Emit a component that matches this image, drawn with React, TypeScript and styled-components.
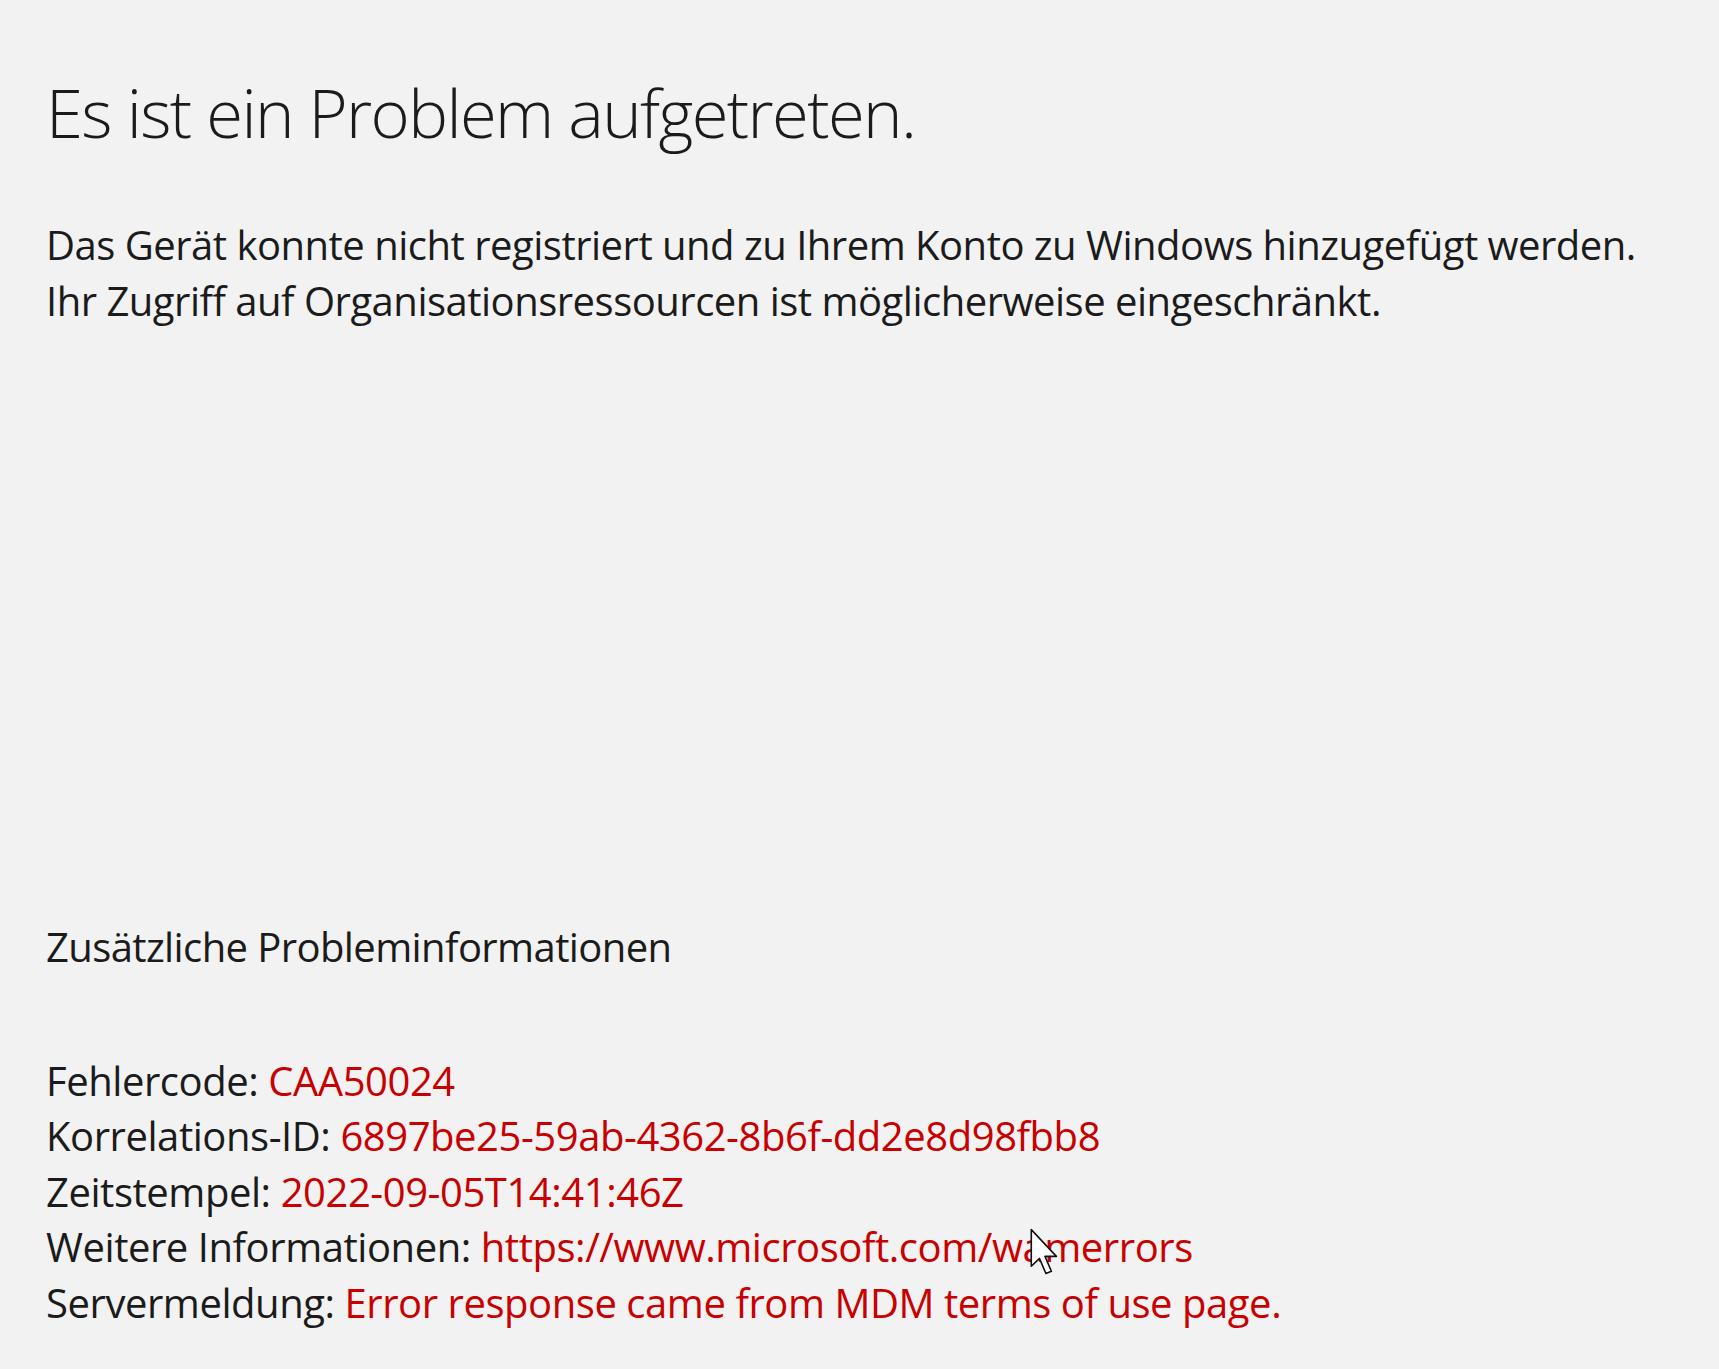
import React, { FC } from "react";
import styled, { createGlobalStyle } from "styled-components";

const GlobalStyle = createGlobalStyle`
  html, body {
    margin: 0;
    padding: 0;
    background: #f2f2f2;
  }

  body {
    font-family: "Open Sans", "Noto Sans", "Liberation Sans", sans-serif;
    color: #1b1b1b;
  }
`;

const Page = styled.main`
  position: relative;
  box-sizing: border-box;
  width: 1719px;
  height: 1369px;
  padding: 66px 0 0 46px;
  overflow: hidden;
  display: flex;
  flex-direction: column;
`;

const Title = styled.h1`
  margin: 0;
  font-size: 67px;
  font-weight: 300;
  line-height: 92px;
  letter-spacing: -1.65px;
`;

const Text = styled.p`
  margin: 0;
  font-size: 40px;
  font-weight: 400;
  line-height: 55.5px;
  letter-spacing: -0.45px;
`;

const Message = styled(Text)`
  margin-top: 59px;
  letter-spacing: -0.5px;
`;

const Subtitle = styled(Text)`
  margin-top: auto;
  letter-spacing: -0.6px;
`;

const Details = styled.dl`
  margin: 78px 0 0;
  margin-bottom: 39px;
`;

const Row = styled(Text).attrs({ as: "div" })``;

const Label = styled.dt`
  display: inline;
  margin: 0;
`;

const Value = styled.dd`
  display: inline;
  margin: 0;
  color: #c80000;
`;

const Cursor = styled.svg`
  position: absolute;
  left: 1029px;
  top: 1227px;
  width: 32px;
  height: 51px;
`;

const rows = [
  { label: "Fehlercode:", value: "CAA50024" },
  { label: "Korrelations-ID:", value: "6897be25-59ab-4362-8b6f-dd2e8d98fbb8" },
  { label: "Zeitstempel:", value: "2022-09-05T14:41:46Z" },
  { label: "Weitere Informationen:", value: "https://www.microsoft.com/wamerrors" },
  { label: "Servermeldung:", value: "Error response came from MDM terms of use page." },
];

const App: FC = () => {
  return (
    <>
      <GlobalStyle />
      <Page>
        <Title>Es ist ein Problem aufgetreten.</Title>
        <Message>
          Das Gerät konnte nicht registriert und zu Ihrem Konto zu Windows hinzugefügt werden.
          <br />
          Ihr Zugriff auf Organisationsressourcen ist möglicherweise eingeschränkt.
        </Message>
        <Subtitle>Zusätzliche Probleminformationen</Subtitle>
        <Details>
          {rows.map((r) => (
            <Row key={r.label}>
              <Label>{r.label}</Label> <Value>{r.value}</Value>
            </Row>
          ))}
        </Details>
        <Cursor viewBox="0 0 14 22">
          <path
            d="M1 1 L1 17 L4.6 13.6 L7.4 20.2 L9.8 19.2 L7 12.7 L12 12.7 Z"
            fill="#ffffff"
            stroke="#111111"
            strokeWidth="0.7"
            strokeLinejoin="round"
          />
        </Cursor>
      </Page>
    </>
  );
};

export default App;
